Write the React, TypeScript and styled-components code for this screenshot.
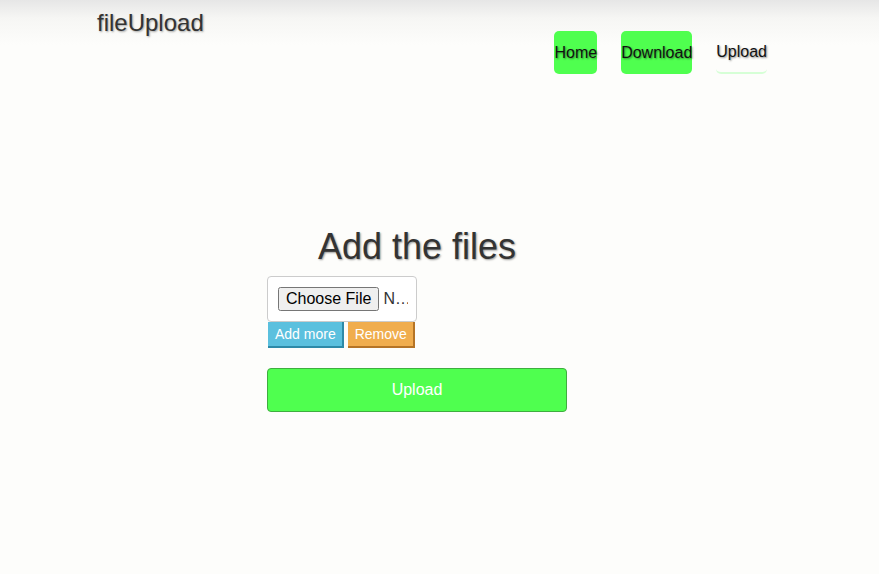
import React from "react";
import styled, { createGlobalStyle } from "styled-components";

const Global = createGlobalStyle`
  html, body { margin: 0; padding: 0; }
  body {
    background: #fdfdfb;
    font-family: "Liberation Sans", Arial, sans-serif;
    color: #333;
    min-height: 574px;
  }
`;

const Header = styled.header`
  height: 80px;
  background: linear-gradient(to bottom, #e6e6e6 0px, #f6f6f4 18px, #fdfdfb 45px);
  display: flex;
  justify-content: space-between;
  align-items: flex-start;
  padding: 0 112px 0 97px;
`;

const Logo = styled.div`
  font-size: 24px;
  line-height: 26px;
  margin-top: 10px;
  color: #333;
  text-shadow: 1px 1px 2px rgba(0, 0, 0, 0.35);
`;

const Nav = styled.nav`
  display: flex;
  gap: 24px;
  margin-top: 31px;
`;

const NavItem = styled.a<{ $active?: boolean }>`
  display: flex;
  align-items: center;
  height: 43px;
  box-sizing: border-box;
  font-size: 16px;
  color: #111;
  text-decoration: none;
  border-radius: 5px;
  background: ${(p) => (p.$active ? "transparent" : "#4fff4f")};
  border-bottom: ${(p) => (p.$active ? "2px solid #d6ffd6" : "none")};
  text-shadow: 1px 1px 2px rgba(0, 0, 0, 0.45);
`;

const Main = styled.main`
  padding-left: 267px;
  padding-top: 147px;
  width: 300px;
`;

const Title = styled.h1`
  margin: 0;
  text-align: center;
  font-size: 36px;
  font-weight: 500;
  line-height: 40px;
  color: #333;
  text-shadow: 1px 1px 2px rgba(0, 0, 0, 0.4);
`;

const FileBox = styled.div`
  margin-top: 9px;
  width: 150px;
  height: 46px;
  box-sizing: border-box;
  border: 1px solid #ccc;
  border-radius: 4px;
  background: #fff;
  padding: 10px;
  overflow: hidden;
`;

const FileInput = styled.input`
  width: 130px;
  font-family: "Liberation Sans", Arial, sans-serif;
  font-size: 16px;
  color: #333;
  &::file-selector-button {
    font-family: "Liberation Sans", Arial, sans-serif;
    font-size: 16px;
    color: #000;
    margin-right: 4px;
  }
`;

const ButtonRow = styled.div`
  display: flex;
  gap: 4px;
  padding-left: 1px;
`;

const SmallButton = styled.button<{ $bg: string; $edge: string }>`
  height: 26px;
  box-sizing: border-box;
  padding: 0 6px 0 7px;
  font-family: "Liberation Sans", Arial, sans-serif;
  font-size: 14px;
  color: #fff;
  background: ${(p) => p.$bg};
  border: none;
  border-right: 2px solid ${(p) => p.$edge};
  border-bottom: 2px solid ${(p) => p.$edge};
  border-radius: 0;
`;

const UploadButton = styled.button`
  margin-top: 20px;
  width: 300px;
  height: 44px;
  box-sizing: border-box;
  background: #4fff4f;
  border: 1px solid #3fae3f;
  border-radius: 4px;
  color: #fff;
  font-family: "Liberation Sans", Arial, sans-serif;
  font-size: 16px;
`;

export default function App() {
  return (
    <>
      <Global />
      <Header>
        <Logo>fileUpload</Logo>
        <Nav>
          <NavItem href="#">Home</NavItem>
          <NavItem href="#">Download</NavItem>
          <NavItem href="#" $active>Upload</NavItem>
        </Nav>
      </Header>
      <Main>
        <Title>Add the files</Title>
        <FileBox>
          <FileInput type="file" />
        </FileBox>
        <ButtonRow>
          <SmallButton $bg="#5bc0de" $edge="#2d8aa8">Add more</SmallButton>
          <SmallButton $bg="#f0ad4e" $edge="#b57426">Remove</SmallButton>
        </ButtonRow>
        <UploadButton>Upload</UploadButton>
      </Main>
    </>
  );
}
